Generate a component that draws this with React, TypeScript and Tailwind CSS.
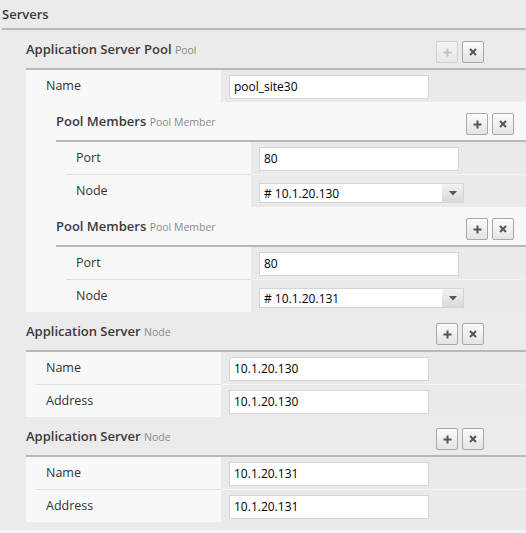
import React from 'react';

// shared cell colours
const LABEL_CELL = 'w-[195px] shrink-0 bg-[#f8f8f8] pl-[20px] pt-px flex items-center text-[12.5px] text-[#333]';
const VALUE_CELL = 'flex-1 bg-[#eaeaea] pl-[8px] pt-[3px]';

function PlusIcon({ color }: { color: string }) {
    return (
        <svg width="9" height="9" viewBox="0 0 9 9">
            <path d="M4.5 0.5v8M0.5 4.5h8" stroke={color} strokeWidth="2" />
        </svg>
    );
}

function CloseIcon() {
    return (
        <svg width="8" height="8" viewBox="0 0 8 8">
            <path d="M1 1l6 6M7 1l-6 6" stroke="#555" strokeWidth="2" />
        </svg>
    );
}

function ToolButton({ kind, disabled }: { kind: 'add' | 'remove'; disabled?: boolean }) {
    return (
        <button
            type="button"
            className={
                disabled
                    ? 'w-[22px] h-[22px] rounded-[2px] border border-[#d0d0d0] bg-gradient-to-b from-[#f4f4f4] to-[#e8e8e8] flex items-center justify-center'
                    : 'w-[22px] h-[22px] rounded-[2px] border border-[#a8a8a8] bg-gradient-to-b from-[#fbfbfb] to-[#e4e4e4] flex items-center justify-center'
            }
        >
            {kind === 'add' ? <PlusIcon color={disabled ? '#c2c2c2' : '#555'} /> : <CloseIcon />}
        </button>
    );
}

function SectionHeader({ title, type, addDisabled }: { title: string; type: string; addDisabled?: boolean }) {
    return (
        <div className="flex items-center h-[40px] border-b-2 border-[#b8b8b8]">
            <div className="w-[410px] shrink-0 pt-[2px] text-[13px] font-semibold text-[#3a3a3a]">
                {title} <span className="text-[10.5px] font-normal text-[#8a8a8a]">{type}</span>
            </div>
            <div className="flex gap-[4px] mt-[6px]">
                <ToolButton kind="add" disabled={addDisabled} />
                <ToolButton kind="remove" />
            </div>
        </div>
    );
}

function Separator() {
    return (
        <div className="flex h-px">
            <div className="w-[10px] bg-[#f8f8f8]" />
            <div className="w-[185px] bg-[#dedede]" />
            <div className="flex-1 bg-[#f4f4f4]" />
        </div>
    );
}

function TextField({ label, value }: { label: string; value: string }) {
    return (
        <div className="flex h-[32px]">
            <div className={LABEL_CELL}>{label}</div>
            <div className={VALUE_CELL}>
                <input
                    readOnly
                    value={value}
                    className="w-[200px] h-[24px] border border-[#d6d6d6] bg-white px-[4px] text-[12px] text-black outline-none"
                />
            </div>
        </div>
    );
}

function SelectField({ label, value }: { label: string; value: string }) {
    return (
        <div className="flex h-[32px]">
            <div className={LABEL_CELL}>{label}</div>
            <div className={VALUE_CELL}>
                <div className="w-[205px] h-[20px] mt-[5px] flex border border-[#d4d4d4] bg-white">
                    <div className="flex-1 pl-[4px] text-[12px] leading-[19px] text-black">{value}</div>
                    <div className="w-[21px] bg-gradient-to-b from-[#f2f2f2] to-[#d9d9d9] flex items-center justify-center">
                        <svg width="8" height="5" viewBox="0 0 8 5">
                            <path d="M0 0h8L4 4.5z" fill="#555" />
                        </svg>
                    </div>
                </div>
            </div>
        </div>
    );
}

function PoolMember({ node }: { node: string }) {
    return (
        <div>
            <SectionHeader title="Pool Members" type="Pool Member" />
            <TextField label="Port" value="80" />
            <Separator />
            <SelectField label="Node" value={node} />
        </div>
    );
}

function NodeSection({ address }: { address: string }) {
    return (
        <div>
            <SectionHeader title="Application Server" type="Node" />
            <TextField label="Name" value={address} />
            <Separator />
            <TextField label="Address" value={address} />
        </div>
    );
}

export default function App() {
    return (
        <div className="min-h-screen bg-[#f4f4f4] font-['Open_Sans',sans-serif]">
            <div className="bg-[#ebebeb] pl-[2px] pb-[8px]">
                {/* Servers */}
                <div className="flex items-center h-[30px] pt-[2px] border-b-2 border-[#b8b8b8] text-[13px] font-semibold text-[#3a3a3a]">
                    Servers
                </div>

                <div className="pl-[24px]">
                    {/* Pool */}
                    <div>
                        <SectionHeader title="Application Server Pool" type="Pool" addDisabled />
                        <TextField label="Name" value="pool_site30" />
                        <div className="bg-[#f8f8f8] pl-[30px]">
                            <PoolMember node="# 10.1.20.130" />
                            <PoolMember node="# 10.1.20.131" />
                        </div>
                    </div>

                    <NodeSection address="10.1.20.130" />
                    <NodeSection address="10.1.20.131" />
                </div>
            </div>
        </div>
    );
}
